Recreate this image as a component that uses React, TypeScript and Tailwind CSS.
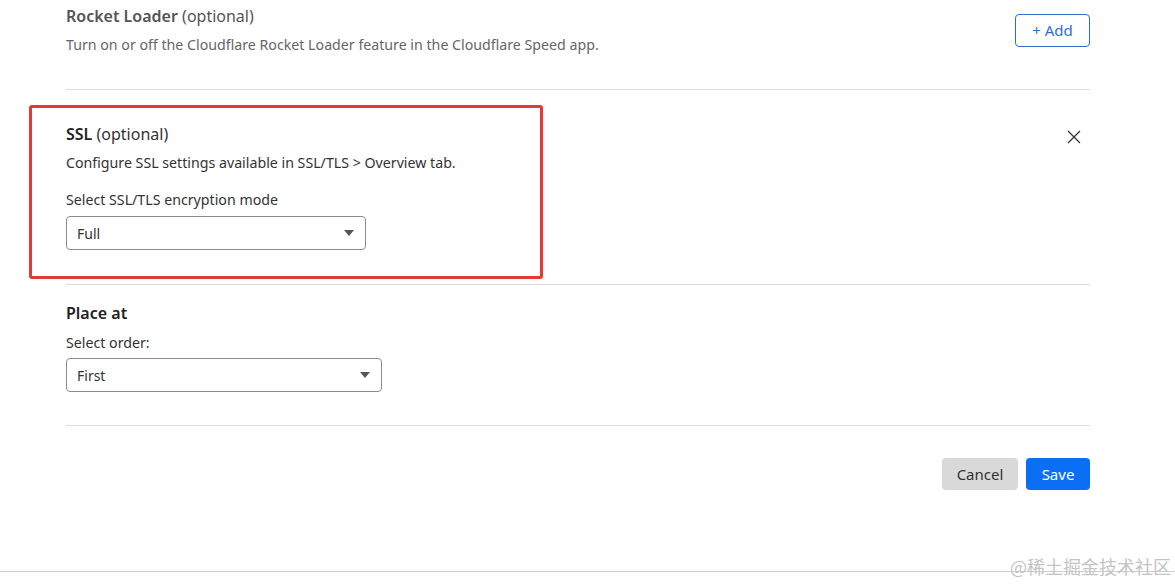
import React from 'react'

const font = { fontFamily: '"Segoe UI", "Noto Sans", "Noto Sans CJK SC", sans-serif' }

const Caret: React.FC = () => (
    <svg width="10" height="6" viewBox="0 0 10 6" className="text-[#555]">
        <path d="M0 0 H10 L5 6 Z" fill="currentColor" />
    </svg>
)

const Select: React.FC<{ value: string; width: string }> = ({ value, width }) => (
    <div className={`${width} h-[34px] flex items-center justify-between pl-[10px] pr-[11px] border border-[#8c8c8c] rounded-[4px] text-[14px] text-[#333]`}>
        <span>{value}</span>
        <Caret />
    </div>
)

const App: React.FC = () => {
    return (
        <div className="relative w-[1175px] h-[585px] bg-white overflow-hidden" style={font}>
            <div className="w-[1024px] ml-[66px]">
                {/* rocket loader */}
                <div className="flex justify-between pt-[4px] h-[90px] border-b border-[#dcdcdc]">
                    <div>
                        <h3 className="text-[16px] leading-[24px] text-[#555]">
                            <span className="font-semibold">Rocket Loader</span> <span>(optional)</span>
                        </h3>
                        <p className="mt-[7px] text-[14.2px] leading-[20px] text-[#666]">
                            Turn on or off the Cloudflare Rocket Loader feature in the Cloudflare Speed app.
                        </p>
                    </div>
                    <button className="mt-[10px] h-[33px] w-[75px] border border-[#2f6ed1] rounded-[4px] text-[15px] text-[#2f6ed1]">
                        + Add
                    </button>
                </div>

                {/* ssl */}
                <div className="flex justify-between pt-[32px] h-[195px] border-b border-[#dcdcdc]">
                    <div>
                        <h3 className="text-[16px] leading-[24px] text-[#222]">
                            <span className="font-semibold">SSL</span> <span className="text-[#333]">(optional)</span>
                        </h3>
                        <p className="mt-[7px] text-[14.2px] leading-[20px] text-[#333]">
                            Configure SSL settings available in SSL/TLS &gt; Overview tab.
                        </p>
                        <p className="mt-[17px] text-[14.2px] leading-[20px] text-[#333]">Select SSL/TLS encryption mode</p>
                        <div className="mt-[6px]">
                            <Select value="Full" width="w-[300px]" />
                        </div>
                    </div>
                    <svg width="14" height="14" viewBox="0 0 14 14" className="mt-[8px] mr-[9px] text-[#333]">
                        <path d="M1 1 L13 13 M13 1 L1 13" stroke="currentColor" strokeWidth="1.3" />
                    </svg>
                </div>

                {/* place at */}
                <div className="pt-[16px] h-[141px] border-b border-[#dcdcdc]">
                    <h3 className="text-[16px] leading-[24px] font-semibold text-[#222]">Place at</h3>
                    <p className="mt-[8px] text-[14.2px] leading-[20px] text-[#333]">Select order:</p>
                    <div className="mt-[5px]">
                        <Select value="First" width="w-[316px]" />
                    </div>
                </div>

                <div className="flex justify-end gap-[8px] mt-[32px]">
                    <button className="h-[32px] w-[76px] rounded-[4px] bg-[#d9d9d9] text-[15px] text-[#333]">Cancel</button>
                    <button className="h-[32px] w-[64px] rounded-[4px] bg-[#0a6ff5] text-[15px] text-white">Save</button>
                </div>
            </div>

            {/* annotation box */}
            <div className="absolute left-[29px] top-[105px] w-[514px] h-[174px] border-[3px] border-[#e53935] rounded-[3px]" />

            {/* bottom rule + watermark */}
            <div className="absolute left-0 right-0 top-[571px] border-t border-[#cfcfcf]" />
            <span
                className="absolute right-[4px] top-[553px] text-[18px] leading-[26px] text-[#c4c4c4] bg-transparent"
                style={{ fontFamily: '"Noto Sans CJK SC", "Liberation Serif", serif' }}
            >
                @稀土掘金技术社区
            </span>
        </div>
    )
}

export default App
